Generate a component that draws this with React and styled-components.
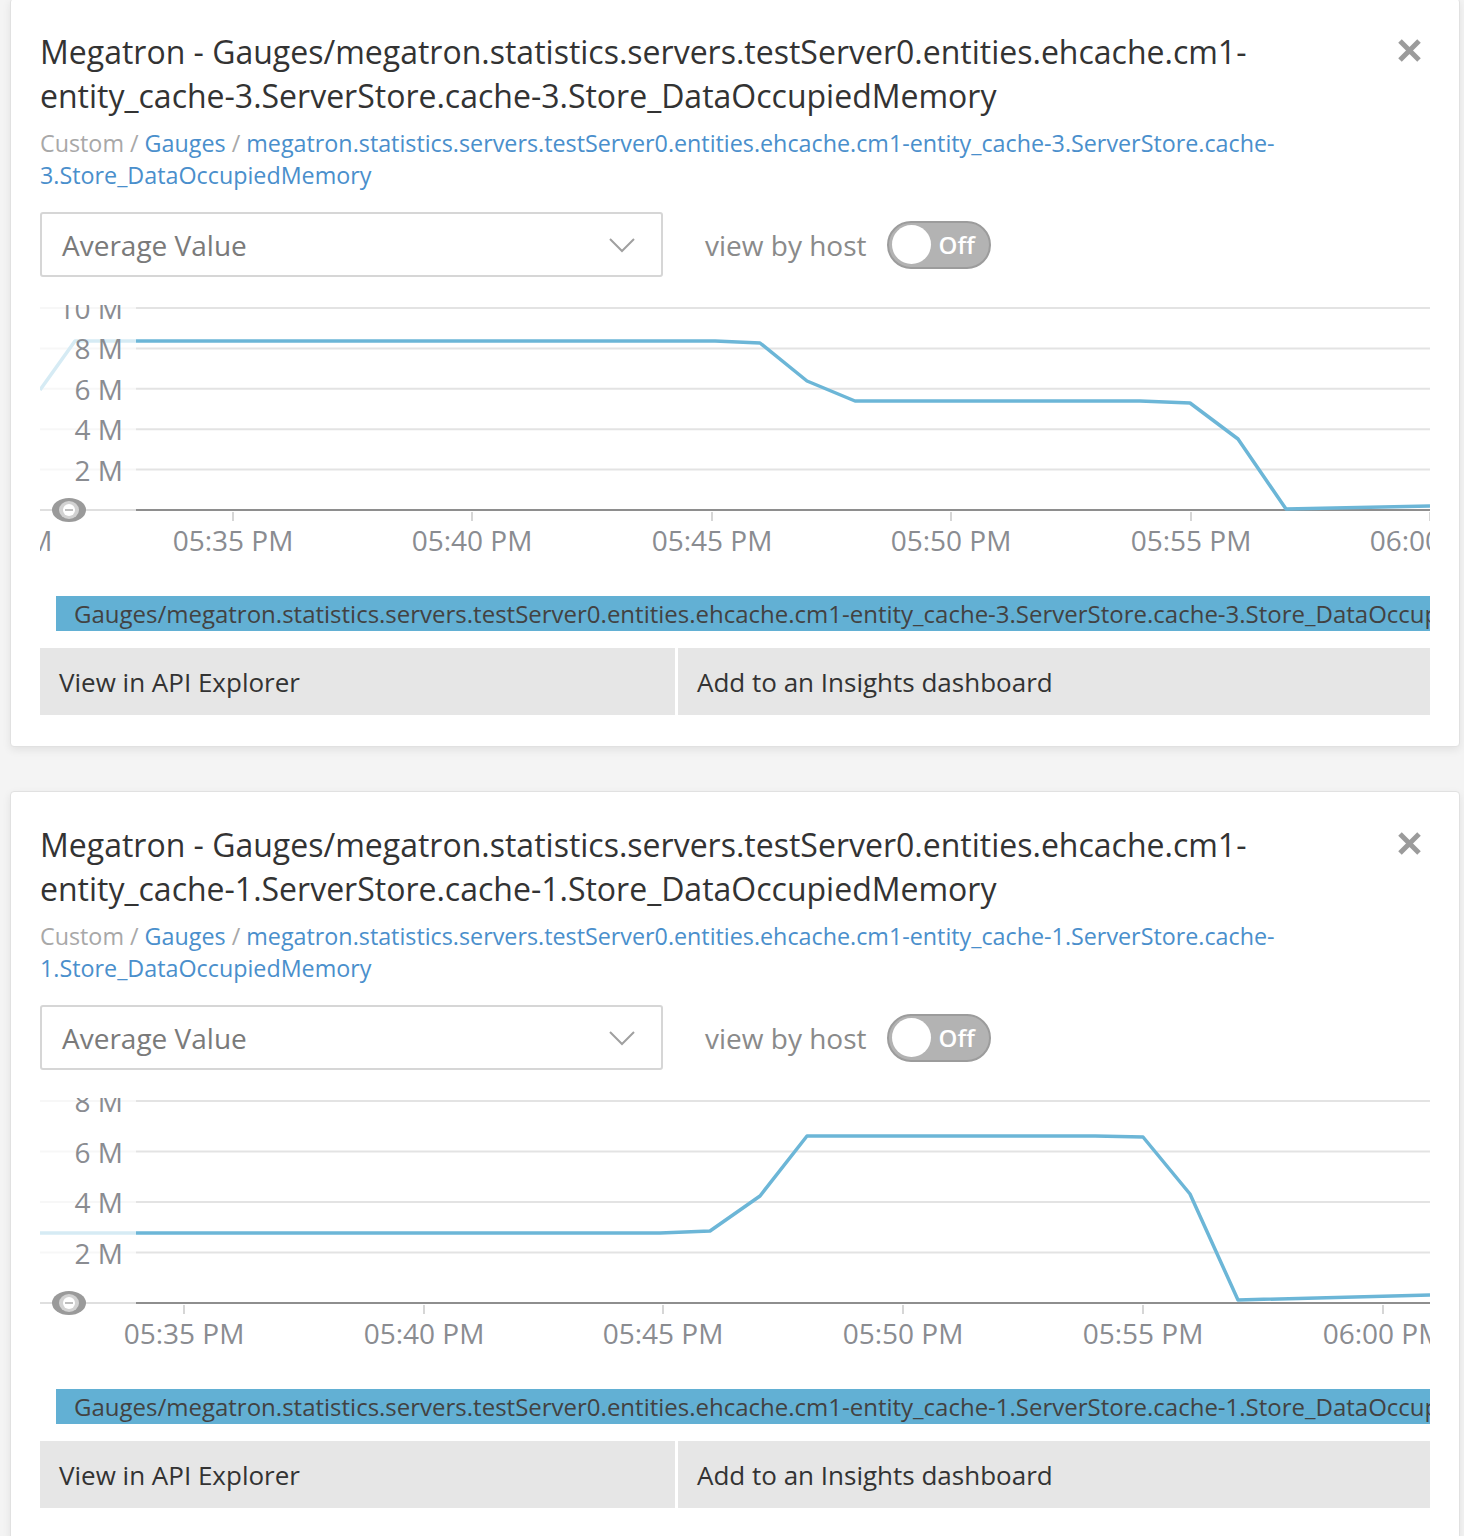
import styled, { createGlobalStyle } from 'styled-components'

const GlobalStyle = createGlobalStyle`
	body {
		margin: 0;
		background: #f4f4f4;
		font-family: 'Open Sans', 'Liberation Sans', sans-serif;
	}
`

const Page = styled.div`
		padding: 0 4px 40px 10px;
	`,
	Card = styled.section`
		background: #fff;
		border: 1px solid #e1e1e1;
		border-radius: 4px;
		box-shadow: 0 3px 8px rgba(0, 0, 0, 0.08);
		padding: 31px 29px 31px 29px;

		&:first-child { margin-top: -2px; }
		& + & { margin-top: 44px; }
	`,
	Header = styled.div`
		display: flex;
		align-items: flex-start;
		justify-content: space-between;
	`,
	Title = styled.h2`
		flex: 0 1 1290px;
		margin: 0;
		font-size: 32px;
		line-height: 44px;
		font-weight: 400;
		color: #333;
	`,
	Close = styled.button`
		flex: none;
		width: 25px;
		height: 25px;
		margin: 8px 8px 0 0;
		padding: 0;
		border: none;
		background: none;
		cursor: pointer;
		svg { display: block; }
	`,
	Breadcrumb = styled.div`
		margin-top: 9px;
		font-size: 23.3px;
		line-height: 32px;
		color: #a8a8a8;
	`,
	Crumb = styled.a`
		color: #4a8fcc;
		text-decoration: none;
	`,
	Controls = styled.div`
		margin-top: 21px;
		display: flex;
		align-items: center;
	`,
	Select = styled.div`
		box-sizing: border-box;
		width: 623px;
		height: 65px;
		border: 2px solid #d6d6d6;
		border-radius: 3px;
		padding: 0 26px 0 20px;
		display: flex;
		align-items: center;
		justify-content: space-between;
		font-size: 28px;
		color: #7a7a7a;
	`,
	HostLabel = styled.span`
		margin-left: 42px;
		font-size: 28px;
		color: #8a8a8a;
	`,
	Toggle = styled.div`
		box-sizing: border-box;
		margin-left: 20px;
		width: 104px;
		height: 48px;
		border-radius: 24px;
		border: 2px solid #9c9c9c;
		background: #b3b3b3;
		padding: 0 3px;
		display: flex;
		align-items: center;
	`,
	Knob = styled.span`
		width: 39px;
		height: 39px;
		border-radius: 50%;
		background: #fff;
	`,
	ToggleText = styled.span`
		margin-left: 8px;
		font-size: 24px;
		font-weight: 600;
		color: #fff;
	`,
	ChartBox = styled.div`
		margin-top: 28px;
		height: 265px;
		svg { display: block; }
	`,
	Legend = styled.div`
		margin: 26px 0 0 16px;
		height: 35px;
		line-height: 35px;
		padding-left: 18px;
		background: #62b0d4;
		color: #424242;
		font-size: 24px;
		white-space: nowrap;
		overflow: hidden;
	`,
	Actions = styled.div`
		margin-top: 17px;
		display: grid;
		grid-template-columns: 635px 1fr;
		gap: 3px;
	`,
	ActionButton = styled.button`
		height: 67px;
		border: none;
		background: #e6e6e6;
		padding: 0 0 0 19px;
		text-align: left;
		font-family: inherit;
		font-size: 26px;
		color: #333;
		cursor: pointer;
	`

const LABEL = '#8a8c91'

const Chart = ({ yTicks, points, xTicks }) => {
	const top = 3, axis = 205
	const step = (axis - top) / yTicks.length
	const line = points.map(p => p.join(',')).join(' ')
	return (
		<svg width='1390' height='265' fontFamily="'Open Sans', sans-serif">
			{yTicks.map((t, i) =>
				<line key={t} x1='0' x2='1390' y1={top + i * step} y2={top + i * step} stroke='#e3e3e3' strokeWidth='2' />
			)}
			<line x1='0' x2='1390' y1={axis} y2={axis} stroke='#8e8e8e' strokeWidth='2' />
			{xTicks.map(([x]) =>
				<line key={x} x1={x} x2={x} y1={axis + 2} y2={axis + 11} stroke='#d6d6d6' strokeWidth='2' />
			)}
			<polyline points={line} fill='none' stroke='#6cb6d7' strokeWidth='3.5' strokeLinejoin='round' />
			<rect x='0' y='0' width='96' height='265' fill='#fff' opacity='0.72' />
			{yTicks.map((t, i) =>
				<text key={t} x='83' y={top + i * step} textAnchor='end' dominantBaseline='central' fontSize='28' fill={LABEL}>{t} M</text>
			)}
			{xTicks.map(([x, label]) =>
				<text key={x} x={x} y='235' textAnchor='middle' dominantBaseline='central' fontSize='28' fill={LABEL}>{label}</text>
			)}
			<g transform={`translate(29 ${axis})`}>
				<ellipse rx='17' ry='12' fill='#9a9a9a' />
				<ellipse rx='10' ry='9' fill='#d2d2d2' />
				<circle r='6' fill='#fff' />
				<line x1='-4' x2='4' y1='0' y2='0' stroke='#aaa' strokeWidth='1.5' />
			</g>
		</svg>
	)
}

const cards = [
	{
		n: 3,
		yTicks: [10, 8, 6, 4, 2],
		points: [[0, 85], [35, 36], [96, 36], [675, 36], [720, 38], [767, 76], [815, 96], [1100, 96], [1150, 98], [1198, 134], [1246, 204], [1390, 201]],
		xTicks: [[-48, '05:30 PM'], [193, '05:35 PM'], [432, '05:40 PM'], [672, '05:45 PM'], [911, '05:50 PM'], [1151, '05:55 PM'], [1390, '06:00 PM']],
	},
	{
		n: 1,
		yTicks: [8, 6, 4, 2],
		points: [[0, 135], [96, 135], [620, 135], [670, 133], [720, 98], [767, 38], [1055, 38], [1103, 39], [1150, 96], [1198, 202], [1390, 197]],
		xTicks: [[144, '05:35 PM'], [384, '05:40 PM'], [623, '05:45 PM'], [863, '05:50 PM'], [1103, '05:55 PM'], [1343, '06:00 PM']],
	},
]

const MetricCard = ({ n, yTicks, points, xTicks }) => {
	const metric = `megatron.statistics.servers.testServer0.entities.ehcache.cm1-entity_cache-${n}.ServerStore.cache-${n}.Store_DataOccupiedMemory`
	return (
		<Card>
			<Header>
				<Title>Megatron - Gauges/{metric}</Title>
				<Close aria-label='Close'>
					<svg width='25' height='25' viewBox='0 0 25 25'>
						<path d='M3 3 L22 22 M22 3 L3 22' stroke='#9b9b9b' strokeWidth='5' />
					</svg>
				</Close>
			</Header>
			<Breadcrumb>
				Custom / <Crumb href='#'>Gauges</Crumb> / <Crumb href='#'>{metric}</Crumb>
			</Breadcrumb>
			<Controls>
				<Select>
					Average Value
					<svg width='26' height='16' viewBox='0 0 26 16'>
						<polyline points='1,2 13,14 25,2' fill='none' stroke='#a0a0a0' strokeWidth='2' />
					</svg>
				</Select>
				<HostLabel>view by host</HostLabel>
				<Toggle>
					<Knob />
					<ToggleText>Off</ToggleText>
				</Toggle>
			</Controls>
			<ChartBox>
				<Chart yTicks={yTicks} points={points} xTicks={xTicks} />
			</ChartBox>
			<Legend>Gauges/{metric}</Legend>
			<Actions>
				<ActionButton>View in API Explorer</ActionButton>
				<ActionButton>Add to an Insights dashboard</ActionButton>
			</Actions>
		</Card>
	)
}

const App = () =>
	<Page>
		<GlobalStyle />
		{cards.map(c => <MetricCard key={c.n} {...c} />)}
	</Page>

export default App
